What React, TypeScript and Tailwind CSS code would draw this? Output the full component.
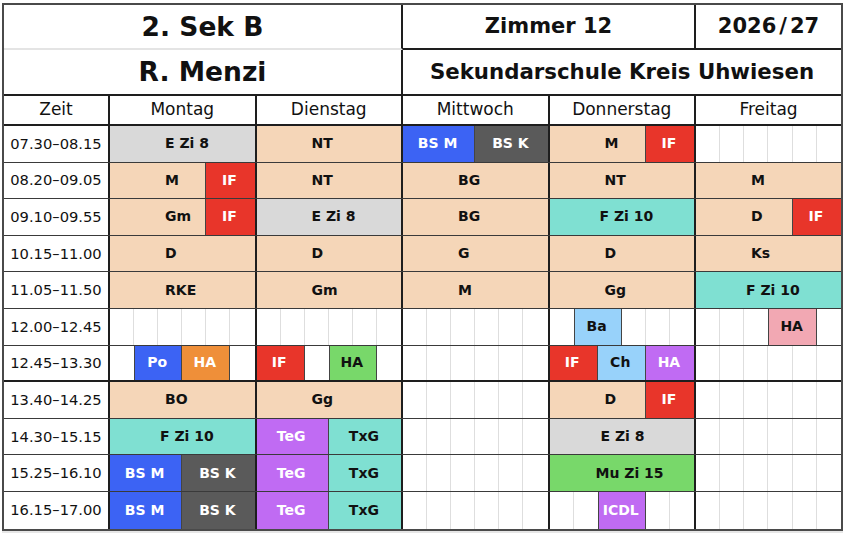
import React from 'react'

type Seg = {
  span: number
  label?: string
  bg?: string
  white?: boolean
  pl?: string
  wide?: boolean
}

const PE = 'bg-[#f5d6b8]'
const GR = 'bg-[#d9d9d9]'
const TL = 'bg-[#7fe0d2]'
const BL = 'bg-[#3c63f4]'
const DG = 'bg-[#5a5a5a]'
const RD = 'bg-[#e8352a]'
const PU = 'bg-[#c06bf3]'
const GN = 'bg-[#78d86a]'
const OR = 'bg-[#ef8f39]'
const LB = 'bg-[#98d2fa]'
const PK = 'bg-[#f2a8b3]'

const spanClass: Record<number, string> = {
  1: 'col-span-1',
  2: 'col-span-2',
  3: 'col-span-3',
  4: 'col-span-4',
  6: 'col-span-6',
}

// lesson that runs over 4 or 6 columns: label sits at a fixed offset
const blk = (span: number, label: string, bg: string, pl = 'pl-[55px]'): Seg => ({ span, label, bg, pl, wide: true })
// short lesson (2 or 3 columns): label centred
const sm = (span: number, label: string, bg: string, white = false): Seg => ({ span, label, bg, white })
const empty = (n: number): Seg[] => Array.from({ length: n }, () => ({ span: 1 }))

const full = (label: string, bg = PE, pl?: string) => [blk(6, label, bg, pl)]

const rows: { time: string; days: Seg[][] }[] = [
  {
    time: '07.30–08.15',
    days: [
      full('E Zi 8', GR),
      full('NT'),
      [sm(3, 'BS M', BL, true), sm(3, 'BS K', DG, true)],
      [blk(4, 'M', PE), sm(2, 'IF', RD, true)],
      empty(6),
    ],
  },
  {
    time: '08.20–09.05',
    days: [[blk(4, 'M', PE), sm(2, 'IF', RD, true)], full('NT'), full('BG'), full('NT'), full('M')],
  },
  {
    time: '09.10–09.55',
    days: [
      [blk(4, 'Gm', PE), sm(2, 'IF', RD, true)],
      full('E Zi 8', GR),
      full('BG'),
      full('F Zi 10', TL, 'pl-[50px]'),
      [blk(4, 'D', PE), sm(2, 'IF', RD, true)],
    ],
  },
  {
    time: '10.15–11.00',
    days: [full('D'), full('D'), full('G'), full('D'), full('Ks')],
  },
  {
    time: '11.05–11.50',
    days: [full('RKE'), full('Gm'), full('M'), full('Gg'), full('F Zi 10', TL, 'pl-[50px]')],
  },
  {
    time: '12.00–12.45',
    days: [
      empty(6),
      empty(6),
      empty(6),
      [...empty(1), sm(2, 'Ba', LB), ...empty(3)],
      [...empty(3), sm(2, 'HA', PK), ...empty(1)],
    ],
  },
  {
    time: '12.45–13.30',
    days: [
      [...empty(1), sm(2, 'Po', BL, true), sm(2, 'HA', OR, true), ...empty(1)],
      [sm(2, 'IF', RD, true), ...empty(1), sm(2, 'HA', GN), ...empty(1)],
      empty(6),
      [sm(2, 'IF', RD, true), sm(2, 'Ch', LB), sm(2, 'HA', PU, true)],
      empty(6),
    ],
  },
  {
    time: '13.40–14.25',
    days: [full('BO'), full('Gg'), empty(6), [blk(4, 'D', PE), sm(2, 'IF', RD, true)], empty(6)],
  },
  {
    time: '14.30–15.15',
    days: [
      full('F Zi 10', TL, 'pl-[50px]'),
      [sm(3, 'TeG', PU, true), sm(3, 'TxG', TL)],
      empty(6),
      full('E Zi 8', GR, 'pl-[51px]'),
      empty(6),
    ],
  },
  {
    time: '15.25–16.10',
    days: [
      [sm(3, 'BS M', BL, true), sm(3, 'BS K', DG, true)],
      [sm(3, 'TeG', PU, true), sm(3, 'TxG', TL)],
      empty(6),
      full('Mu Zi 15', GN, 'pl-[46px]'),
      empty(6),
    ],
  },
  {
    time: '16.15–17.00',
    days: [
      [sm(3, 'BS M', BL, true), sm(3, 'BS K', DG, true)],
      [sm(3, 'TeG', PU, true), sm(3, 'TxG', TL)],
      empty(6),
      [...empty(2), sm(2, 'ICDL', PU, true), ...empty(2)],
      empty(6),
    ],
  },
]

const dayNames = ['Montag', 'Dienstag', 'Mittwoch', 'Donnerstag', 'Freitag']
const cols = 'grid grid-cols-[106px_146.5px_146.5px_146.5px_146.5px_1fr]'

function DayCell({ segs, last }: { segs: Seg[]; last: boolean }) {
  let start = 0
  return (
    <div className={`grid grid-cols-6 ${last ? '' : 'border-r-2 border-[#1e1e1e]'}`}>
      {segs.map((s, i) => {
        const s0 = start
        const end = start + s.span
        start = end
        const prev = segs[i - 1]
        const next = segs[i + 1]
        if (!s.bg) {
          const line = end < 6 && next && !next.bg ? 'border-r border-[#dedede]' : ''
          return <div key={i} className={`${spanClass[s.span]} ${line}`} />
        }
        const r = end < 6 ? 'border-r border-[#444]' : ''
        const l = s0 > 0 && prev && !prev.bg ? 'border-l border-[#444]' : ''
        const align = s.wide ? `justify-start ${s.pl}` : 'justify-center pr-[2px]'
        return (
          <div
            key={i}
            className={`${spanClass[s.span]} ${s.bg} ${r} ${l} flex items-center ${align} text-[14px] font-bold ${
              s.white ? 'text-white' : 'text-[#111]'
            }`}
          >
            {s.label}
          </div>
        )
      })}
    </div>
  )
}

export default function App() {
  return (
    <div className="min-h-screen bg-white pt-[3px] pl-[2px] font-['DejaVu_Sans',Verdana,sans-serif] text-[#111]">
      <div className="w-[841px] border-2 border-[#4a4a4a] shadow-[0_2px_0_#e6e6e6]">
        {/* Title block */}
        <div className="grid grid-cols-[399px_293px_1fr]">
          <div className="flex h-[45px] items-center justify-center border-r-2 border-b-2 border-r-[#1e1e1e] border-b-[#e4e4e4] pt-[1px] text-[26.5px] font-bold">
            2. Sek B
          </div>
          <div className="flex h-[45px] items-center justify-center border-r-2 border-b-2 border-[#1e1e1e] pt-[1px] text-[21px] font-bold">
            Zimmer 12
          </div>
          <div className="flex h-[45px] items-center justify-center border-b-2 border-[#1e1e1e] pt-[1px] text-[21px] font-bold">
            2026<span className="mx-[3px]">/</span>27
          </div>
        </div>
        <div className="grid h-[46px] grid-cols-[399px_1fr] border-b-2 border-[#1e1e1e]">
          <div className="flex items-center justify-center border-r-2 border-[#1e1e1e] text-[26.5px] font-bold">
            R. Menzi
          </div>
          <div className="flex items-center justify-center text-[21.3px] font-bold">
            Sekundarschule Kreis Uhwiesen
          </div>
        </div>

        {/* Day header */}
        <div className={`${cols} h-[30px] border-b-2 border-[#1e1e1e] text-[17px]`}>
          <div className="flex items-center justify-center border-r-2 border-[#1e1e1e]">Zeit</div>
          {dayNames.map((d, i) => (
            <div
              key={d}
              className={`flex items-center justify-center ${i < 4 ? 'border-r-2 border-[#1e1e1e]' : ''}`}
            >
              {d}
            </div>
          ))}
        </div>

        {/* Lessons */}
        {rows.map((row, ri) => (
          <div
            key={row.time}
            className={`${cols} h-[36.6px] ${
              ri === 6 ? 'border-b-2 border-[#1e1e1e]' : ri === rows.length - 1 ? '' : 'border-b border-[#3a3a3a]'
            }`}
          >
            <div className="flex items-center justify-center border-r-2 border-[#1e1e1e] text-[14.7px]">
              {row.time}
            </div>
            {row.days.map((segs, di) => (
              <DayCell key={di} segs={segs} last={di === 4} />
            ))}
          </div>
        ))}
      </div>
    </div>
  )
}
